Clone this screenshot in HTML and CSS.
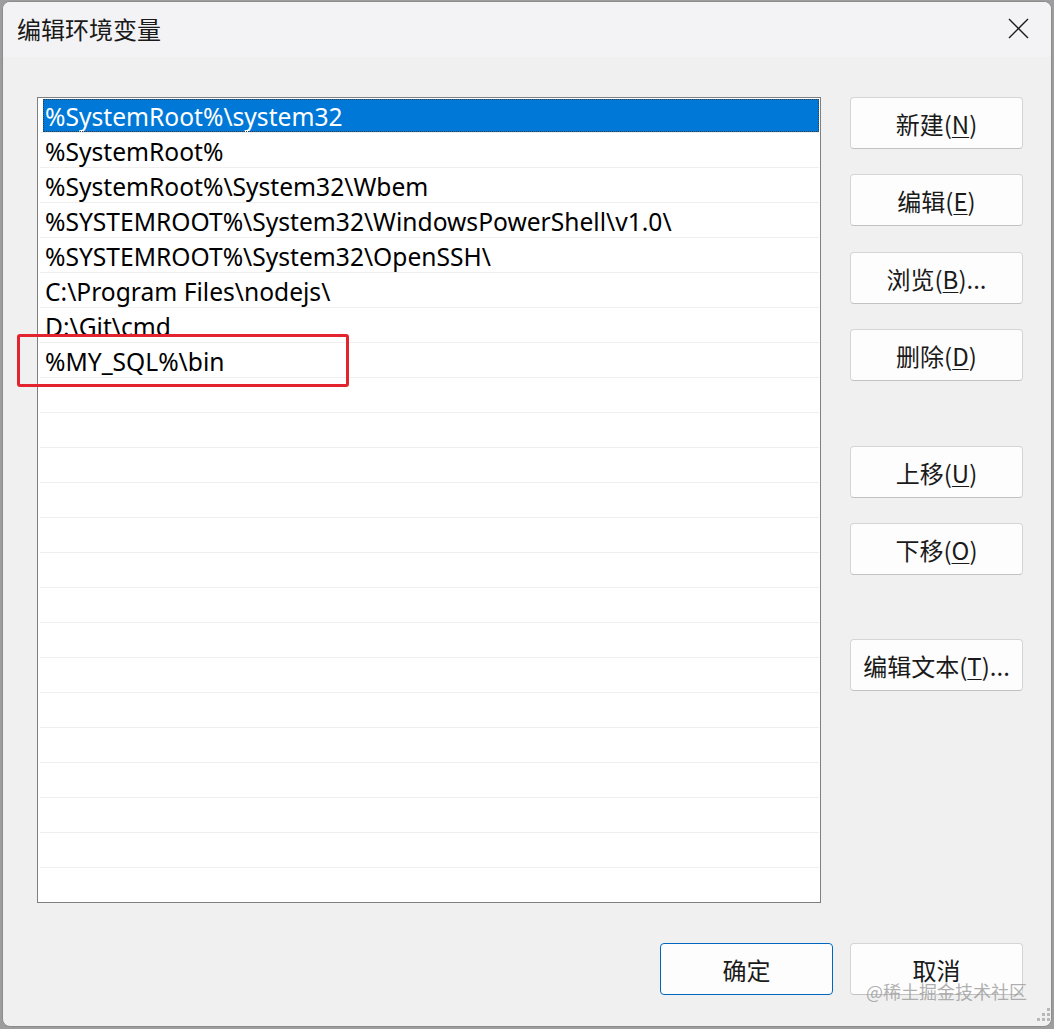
FILE: index.html
```html
<!DOCTYPE html>
<html lang="zh-CN">
<head>
<meta charset="utf-8">
<title>编辑环境变量</title>
<link rel="stylesheet" href="styles.css">
</head>
<body>
<div class="window">
  <div class="titlebar">
    <div class="title">编辑环境变量</div>
    <svg class="close" width="21" height="21" viewBox="0 0 21 21"><path d="M1 1 L20 20 M20 1 L1 20" stroke="#1b1b1b" stroke-width="1.4" fill="none"/></svg>
  </div>
  <div class="content">
    <div class="main">
      <div class="list">
        <div class="row sel"><div class="cell">%SystemRoot%\system32</div></div>
        <div class="row"><div class="cell">%SystemRoot%</div></div>
        <div class="row"><div class="cell">%SystemRoot%\System32\Wbem</div></div>
        <div class="row"><div class="cell">%SYSTEMROOT%\System32\WindowsPowerShell\v1.0\</div></div>
        <div class="row"><div class="cell">%SYSTEMROOT%\System32\OpenSSH\</div></div>
        <div class="row"><div class="cell">C:\Program Files\nodejs\</div></div>
        <div class="row"><div class="cell">D:\Git\cmd</div></div>
        <div class="row"><div class="cell">%MY_SQL%\bin</div></div>
        <div class="row"></div><div class="row"></div><div class="row"></div><div class="row"></div>
        <div class="row"></div><div class="row"></div><div class="row"></div><div class="row"></div>
        <div class="row"></div><div class="row"></div><div class="row"></div><div class="row"></div>
        <div class="row"></div><div class="row"></div><div class="row"></div>
      </div>
      <div class="side">
        <div class="btn">新建(<u>N</u>)</div>
        <div class="btn g25">编辑(<u>E</u>)</div>
        <div class="btn g26">浏览(<u>B</u>)...</div>
        <div class="btn g25">删除(<u>D</u>)</div>
        <div class="btn g65">上移(<u>U</u>)</div>
        <div class="btn g25">下移(<u>O</u>)</div>
        <div class="btn g64">编辑文本(<u>T</u>)...</div>
      </div>
    </div>
    <div class="footer">
      <div class="btn primary">确定</div>
      <div class="btn">取消</div>
    </div>
  </div>
</div>
<div class="highlight-box"></div>
<div class="watermark">@稀土掘金技术社区</div>
<svg class="grip" width="14" height="14" viewBox="0 0 14 14">
  <rect x="10" y="0" width="3" height="3" fill="#b8b8b8"/>
  <rect x="5" y="5" width="3" height="3" fill="#b8b8b8"/>
  <rect x="10" y="5" width="3" height="3" fill="#b8b8b8"/>
  <rect x="0" y="10" width="3" height="3" fill="#b8b8b8"/>
  <rect x="5" y="10" width="3" height="3" fill="#b8b8b8"/>
  <rect x="10" y="10" width="3" height="3" fill="#b8b8b8"/>
</svg>
</body>
</html>
```
FILE: styles.css
```css
* { box-sizing: border-box; }
html, body { margin: 0; padding: 0; }
body {
  background: #9d9d9d;
  padding: 1px 0 0 2px;
  width: 1054px;
  height: 1029px;
  overflow: hidden;
  font-family: "Noto Sans CJK SC", "Noto Sans", sans-serif;
  color: #000;
}
.window {
  width: 1050px;
  height: 1026px;
  border: 1px solid #8c8c8c;
  border-radius: 8px;
  background: #f0f0f0;
  overflow: hidden;
  display: flex;
  flex-direction: column;
}
.titlebar {
  height: 55px;
  background: #f3f3f6;
  display: flex;
  justify-content: space-between;
  align-items: flex-start;
  flex: none;
}
.title {
  font-size: 24px;
  line-height: 24px;
  padding: 15px 0 0 14px;
  color: #1a1a1a;
}
.close { margin: 16px 22px 0 0; }
.content {
  flex: 1;
  padding-top: 40px;
  display: flex;
  flex-direction: column;
}
.main {
  display: flex;
  padding-left: 34px;
  gap: 29px;
}
.list {
  width: 784px;
  height: 806px;
  border: 1px solid #7f7f7f;
  background: #fff;
  padding-left: 2px;
  padding-right: 1px;
  overflow: hidden;
}
.row {
  height: 35px;
  border-bottom: 1px solid #efefef;
  padding-left: 3px;
  display: flex;
  align-items: center;
}
.cell {
  flex: 1;
  height: 33px;
  padding-left: 2px;
  font-family: "Noto Sans", sans-serif;
  font-size: 24.6px;
  line-height: 35px;
  white-space: nowrap;
  overflow: visible;
}
.row.sel .cell {
  background: #0078d7;
  color: #fff;
  outline: 1px dotted #3a3a3a;
  outline-offset: -1px;
}
.side {
  display: flex;
  flex-direction: column;
  width: 173px;
}
.btn {
  width: 173px;
  height: 52px;
  background: #fdfdfd;
  border: 1px solid #d5d5d5;
  border-bottom-color: #c2c2c2;
  border-radius: 4px;
  display: flex;
  align-items: center;
  justify-content: center;
  font-size: 24px;
  color: #1a1a1a;
  white-space: nowrap;
}
.btn u { text-decoration-thickness: 1px; text-underline-offset: 3px; }
.g25 { margin-top: 25px; }
.g26 { margin-top: 26px; }
.g64 { margin-top: 64px; }
.g65 { margin-top: 65px; }
.footer {
  margin-top: 40px;
  display: flex;
  justify-content: flex-end;
  gap: 17px;
  padding-right: 28px;
}
.btn.primary {
  border: 1px solid #0067c0;
}
.highlight-box {
  position: absolute;
  left: 17px;
  top: 334px;
  width: 332px;
  height: 53px;
  border: 3.5px solid #e3232d;
  border-radius: 3px;
}
.watermark {
  position: absolute;
  left: 866px;
  top: 978px;
  font-size: 18px;
  line-height: 26px;
  color: rgba(150, 150, 150, 0.75);
  white-space: nowrap;
}
.grip {
  position: absolute;
  left: 1037px;
  top: 1008px;
}
```
